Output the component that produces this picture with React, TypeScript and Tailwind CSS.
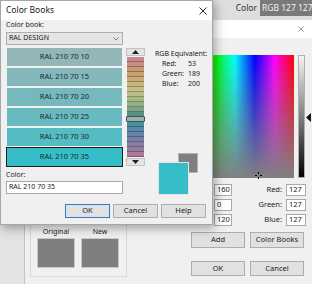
import React from 'react';

const swatches = [
  { name: 'RAL 210 70 10', color: '#93b6b6' },
  { name: 'RAL 210 70 15', color: '#84b7b9' },
  { name: 'RAL 210 70 20', color: '#76b9bc' },
  { name: 'RAL 210 70 25', color: '#67bbc0' },
  { name: 'RAL 210 70 30', color: '#55bcc4' },
  { name: 'RAL 210 70 35', color: '#35bdc8' },
];

const stripe = [
  '#c8878a', '#c98f80', '#c99774', '#c9a172', '#c8ab78', '#c7b67f', '#c4bd87', '#b6be88',
  '#a5ba87', '#90b188', '#78a487', '#5a9281', '#3b7a6d', '#4a8f99', '#5889a9', '#6683ab',
  '#7781a8', '#887ea3', '#9b7b9d', '#ae7995',
];

function Btn({ label, primary, w, h }: { label: string; primary?: boolean; w: string; h: string }) {
  return (
    <div
      className={`${w} ${h} flex items-center justify-center text-[7.5px] bg-[#e1e1e1] border ${
        primary ? 'border-[#2b7bd0]' : 'border-[#adadad]'
      }`}
    >
      {label}
    </div>
  );
}

function ColorBooks() {
  return (
    <div className="absolute left-0 top-0 w-[213px] h-[225px] border border-[#a6a6a6] bg-[#f0f0f0] shadow-[2px_3px_10px_rgba(0,0,0,0.35)] flex flex-col">
      <div className="h-[19px] bg-white flex items-center justify-between pl-[5px] pr-[5px] shrink-0">
        <span className="text-[8.5px]">Color Books</span>
        <svg width="8" height="8" viewBox="0 0 8 8">
          <path d="M0.5 0.5L7.5 7.5M7.5 0.5L0.5 7.5" stroke="#111" strokeWidth="0.9" />
        </svg>
      </div>

      <div className="px-[5px] flex flex-col">
        <span className="text-[7px] leading-[10px]">Color book:</span>
        <div className="flex mt-[2px] items-start">
          {/* book + swatches */}
          <div className="w-[117px] shrink-0 flex flex-col">
            <div className="h-[13px] border border-[#adadad] bg-[#e5e5e5] flex items-center justify-between pl-[2px] pr-[3px]">
              <span className="text-[7px]">RAL DESIGN</span>
              <svg width="6" height="4" viewBox="0 0 6 4">
                <path d="M0.5 0.5L3 3L5.5 0.5" stroke="#666" fill="none" strokeWidth="0.8" />
              </svg>
            </div>
            <div className="mt-[3px] mx-[1px] flex flex-col gap-[2px]">
              {swatches.map((s, i) => (
                <div
                  key={s.name}
                  className={`h-[18px] flex items-center justify-center text-[7.5px] text-[#1c2a2b] ${
                    i === swatches.length - 1 ? 'outline-1 outline-[#1e1e1e]' : ''
                  }`}
                  style={{ backgroundColor: s.color }}
                >
                  {s.name}
                </div>
              ))}
            </div>
            <span className="mt-[4px] text-[7px] leading-[10px]">Color:</span>
            <div className="mt-[1px] h-[13px] bg-white border border-[#a9a9a9] flex items-center pl-[2px] text-[7px]">
              RAL 210 70 35
            </div>
          </div>

          {/* page strip */}
          <div className="ml-[3px] mt-[16px] w-[19px] shrink-0 flex flex-col">
            <div className="h-[8px] bg-[#e4e4e4] border border-[#c3c3c3] flex items-center justify-center">
              <svg width="7" height="4" viewBox="0 0 7 4">
                <path d="M0 4L3.5 0L7 4Z" fill="#222" />
              </svg>
            </div>
            <div className="relative mt-[1px] mx-[1px] flex flex-col">
              {stripe.map((c) => (
                <div key={c} className="h-[5px] border-b border-black/25" style={{ backgroundColor: c }} />
              ))}
              <div className="absolute left-[-1px] right-[-1px] top-[59px] h-[6px] border border-[#4d4d4d] rounded-[1px] bg-[#b9cdd2]/70" />
            </div>
            <div className="mt-[1px] h-[8px] bg-[#e4e4e4] border border-[#c3c3c3] flex items-center justify-center">
              <svg width="7" height="4" viewBox="0 0 7 4">
                <path d="M0 0L3.5 4L7 0Z" fill="#222" />
              </svg>
            </div>
          </div>

          {/* rgb equivalent + preview */}
          <div className="ml-[10px] mt-[17px] flex flex-col text-[7px] leading-[10px] whitespace-nowrap">
            <span>RGB Equivalent:</span>
            <div className="flex"><span className="w-[33px] pl-[7px]">Red:</span><span>53</span></div>
            <div className="flex"><span className="w-[33px] pl-[7px]">Green:</span><span>189</span></div>
            <div className="flex"><span className="w-[33px] pl-[7px]">Blue:</span><span>200</span></div>
            <div className="relative ml-[3px] mt-[64px] w-[40px] h-[43px]">
              <div className="absolute right-0 top-0 w-[20px] h-[20px] bg-[#808080] border border-[#b4b4b4]" />
              <div className="absolute left-0 top-[9px] w-[31px] h-[33px] bg-[#35bdc8] border border-[#e4e4e4]" />
            </div>
          </div>
        </div>

        <div className="mt-[8px] flex justify-end gap-[3px] pr-[1px]">
          <Btn label="OK" primary w="w-[45px]" h="h-[14px]" />
          <Btn label="Cancel" w="w-[45px]" h="h-[14px]" />
          <Btn label="Help" w="w-[45px]" h="h-[14px]" />
        </div>
      </div>
    </div>
  );
}

export default function App() {
  return (
    <div className="relative w-[312px] h-[284px] overflow-hidden bg-[#e3e3e3] font-['Noto_Sans',sans-serif] text-[#1a1a1a] flex flex-col">
      <div className="h-[20px] shrink-0 flex justify-end items-start bg-[#dedede]">
        <span className="text-[8.5px] leading-[16px] mr-[3px] text-[#333]">Color</span>
        <div className="w-[52px] h-[16px] bg-[#7a7a7a] text-[#f2f2f2] text-[8.5px] leading-[16px] pl-[2px] whitespace-nowrap overflow-hidden">
          RGB 127 127 127
        </div>
      </div>

      {/* Select Color dialog behind */}
      <div className="ml-[24px] w-[288px] flex-1 flex flex-col border-l border-[#c2c2c2] bg-[#f0f0f0]">
        <div className="h-[18px] shrink-0 bg-white flex items-center justify-end pr-[8px]">
          <svg width="6" height="6" viewBox="0 0 6 6">
            <path d="M0.3 0.3L5.7 5.7M5.7 0.3L0.3 5.7" stroke="#8a8a8a" strokeWidth="0.8" />
          </svg>
        </div>

        <div className="flex-1 flex flex-col">
          <div className="mt-[17px] flex justify-end items-start pr-[1px]">
            <div className="relative w-[118px] h-[123px] bg-[linear-gradient(to_bottom,rgba(128,128,128,0),#808080),linear-gradient(to_right,#f00,#ff0,#0f0,#0ff,#00f,#f0f,#f00)]">
              <svg className="absolute left-[79px] top-[117px]" width="7" height="7" viewBox="0 0 7 7">
                <rect x="3" y="0" width="1" height="2" fill="#000" />
                <rect x="3" y="5" width="1" height="2" fill="#000" />
                <rect x="0" y="3" width="2" height="1" fill="#000" />
                <rect x="5" y="3" width="2" height="1" fill="#000" />
              </svg>
            </div>
            <div className="ml-[4px] w-[7px] h-[123px] border border-[#b0b0b0] bg-[linear-gradient(to_bottom,#f4f4f4,#808080,#000)]" />
            <svg className="ml-[1px] mt-[58px]" width="5" height="9" viewBox="0 0 5 9">
              <path d="M0 4.5L5 0V9Z" fill="#111" />
            </svg>
          </div>

          <div className="mt-[6px] flex items-start text-[7.5px]">
            <div className="ml-[189px] flex flex-col gap-[3px]">
              {['160', '0', '120'].map((v) => (
                <div key={v} className="w-[18px] h-[12px] bg-white border border-[#a9a9a9] flex items-center pl-[2px]">{v}</div>
              ))}
            </div>
            <div className="ml-auto mr-[6px] flex flex-col gap-[3px]">
              {['Red:', 'Green:', 'Blue:'].map((l) => (
                <div key={l} className="h-[12px] flex items-center justify-end">
                  <span className="mr-[4px]">{l}</span>
                  <div className="w-[20px] h-[12px] bg-white border border-[#a9a9a9] flex items-center pl-[2px]">127</div>
                </div>
              ))}
            </div>
          </div>

          <div className="flex items-start">
            <div className="ml-[5px] mt-[-10px] w-[97px] h-[61px] border border-[#d8d8d8] flex gap-[6px] pl-[6px] pt-[10px] text-[7px]">
              {['Original', 'New'].map((l) => (
                <div key={l} className="flex flex-col items-center">
                  <span className="leading-[10px]">{l}</span>
                  <div className="mt-[1px] w-[38px] h-[30px] bg-[#7f7f7f] border border-[#c9c9c9]" />
                </div>
              ))}
            </div>
            <div className="ml-auto mr-[8px] mt-[6px] flex flex-col">
              <div className="flex gap-[5px]">
                <Btn label="Add" w="w-[54px]" h="h-[16px]" />
                <Btn label="Color Books" w="w-[54px]" h="h-[16px]" />
              </div>
              <div className="mt-[13px] flex gap-[5px]">
                <Btn label="OK" w="w-[54px]" h="h-[15px]" />
                <Btn label="Cancel" w="w-[54px]" h="h-[15px]" />
              </div>
            </div>
          </div>
        </div>
      </div>

      <ColorBooks />
    </div>
  );
}
